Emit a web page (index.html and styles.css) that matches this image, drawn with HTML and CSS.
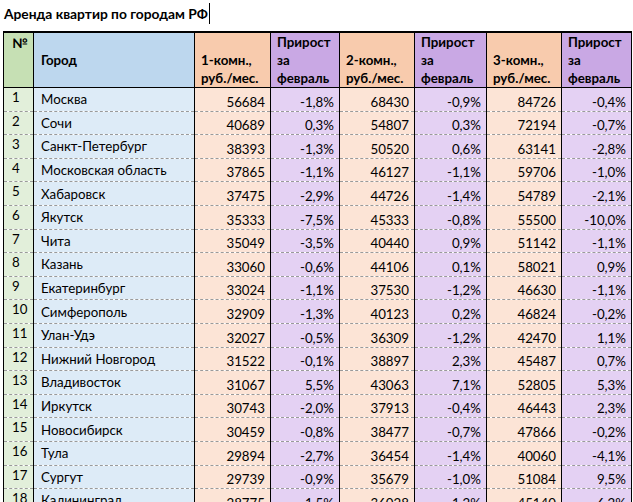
FILE: index.html
```html
<!DOCTYPE html>
<html lang="ru">
<head>
<meta charset="utf-8">
<title>Аренда квартир</title>
<link rel="stylesheet" href="styles.css">
</head>
<body>
<div class="title"><span class="title-text">Аренда квартир по городам РФ</span><span class="cursor"></span></div>
<table class="sheet">
<colgroup>
<col class="c-num"><col class="c-city"><col class="c-r1"><col class="c-g1"><col class="c-r2"><col class="c-g2"><col class="c-r3"><col class="c-g3">
</colgroup>
<thead>
<tr class="head-row">
<th class="num top">№</th>
<th class="city mid">Город</th>
<th class="rent">1-комн.,<br>руб./мес.</th>
<th class="grow">Прирост<br>за<br>февраль</th>
<th class="rent">2-комн.,<br>руб./мес.</th>
<th class="grow">Прирост<br>за<br>февраль</th>
<th class="rent">3-комн.,<br>руб./мес.</th>
<th class="grow">Прирост<br>за<br>февраль</th>
</tr>
</thead>
<tbody>
<tr><td class="num">1</td><td class="city">Москва</td><td class="rent">56684</td><td class="grow">-1,8%</td><td class="rent">68430</td><td class="grow">-0,9%</td><td class="rent">84726</td><td class="grow">-0,4%</td></tr>
<tr><td class="num">2</td><td class="city">Сочи</td><td class="rent">40689</td><td class="grow">0,3%</td><td class="rent">54807</td><td class="grow">0,3%</td><td class="rent">72194</td><td class="grow">-0,7%</td></tr>
<tr><td class="num">3</td><td class="city">Санкт-Петербург</td><td class="rent">38393</td><td class="grow">-1,3%</td><td class="rent">50520</td><td class="grow">0,6%</td><td class="rent">63141</td><td class="grow">-2,8%</td></tr>
<tr><td class="num">4</td><td class="city">Московская область</td><td class="rent">37865</td><td class="grow">-1,1%</td><td class="rent">46127</td><td class="grow">-1,1%</td><td class="rent">59706</td><td class="grow">-1,0%</td></tr>
<tr><td class="num">5</td><td class="city">Хабаровск</td><td class="rent">37475</td><td class="grow">-2,9%</td><td class="rent">44726</td><td class="grow">-1,4%</td><td class="rent">54789</td><td class="grow">-2,1%</td></tr>
<tr><td class="num">6</td><td class="city">Якутск</td><td class="rent">35333</td><td class="grow">-7,5%</td><td class="rent">45333</td><td class="grow">-0,8%</td><td class="rent">55500</td><td class="grow">-10,0%</td></tr>
<tr><td class="num">7</td><td class="city">Чита</td><td class="rent">35049</td><td class="grow">-3,5%</td><td class="rent">40440</td><td class="grow">0,9%</td><td class="rent">51142</td><td class="grow">-1,1%</td></tr>
<tr><td class="num">8</td><td class="city">Казань</td><td class="rent">33060</td><td class="grow">-0,6%</td><td class="rent">44106</td><td class="grow">0,1%</td><td class="rent">58021</td><td class="grow">0,9%</td></tr>
<tr><td class="num">9</td><td class="city">Екатеринбург</td><td class="rent">33024</td><td class="grow">-1,1%</td><td class="rent">37530</td><td class="grow">-1,2%</td><td class="rent">46630</td><td class="grow">-1,1%</td></tr>
<tr><td class="num">10</td><td class="city">Симферополь</td><td class="rent">32909</td><td class="grow">-1,3%</td><td class="rent">40123</td><td class="grow">0,2%</td><td class="rent">46824</td><td class="grow">-0,2%</td></tr>
<tr><td class="num">11</td><td class="city">Улан-Удэ</td><td class="rent">32027</td><td class="grow">-0,5%</td><td class="rent">36309</td><td class="grow">-1,2%</td><td class="rent">42470</td><td class="grow">1,1%</td></tr>
<tr><td class="num">12</td><td class="city">Нижний Новгород</td><td class="rent">31522</td><td class="grow">-0,1%</td><td class="rent">38897</td><td class="grow">2,3%</td><td class="rent">45487</td><td class="grow">0,7%</td></tr>
<tr><td class="num">13</td><td class="city">Владивосток</td><td class="rent">31067</td><td class="grow">5,5%</td><td class="rent">43063</td><td class="grow">7,1%</td><td class="rent">52805</td><td class="grow">5,3%</td></tr>
<tr><td class="num">14</td><td class="city">Иркутск</td><td class="rent">30743</td><td class="grow">-2,0%</td><td class="rent">37913</td><td class="grow">-0,4%</td><td class="rent">46443</td><td class="grow">2,3%</td></tr>
<tr><td class="num">15</td><td class="city">Новосибирск</td><td class="rent">30459</td><td class="grow">-0,8%</td><td class="rent">38477</td><td class="grow">-0,7%</td><td class="rent">47866</td><td class="grow">-0,2%</td></tr>
<tr><td class="num">16</td><td class="city">Тула</td><td class="rent">29894</td><td class="grow">-2,7%</td><td class="rent">36454</td><td class="grow">-1,4%</td><td class="rent">40060</td><td class="grow">-4,1%</td></tr>
<tr><td class="num">17</td><td class="city">Сургут</td><td class="rent">29739</td><td class="grow">-0,9%</td><td class="rent">35679</td><td class="grow">-1,0%</td><td class="rent">51084</td><td class="grow">9,5%</td></tr>
<tr><td class="num">18</td><td class="city">Калининград</td><td class="rent">28775</td><td class="grow">-1,5%</td><td class="rent">36028</td><td class="grow">-1,2%</td><td class="rent">45140</td><td class="grow">6,2%</td></tr>
</tbody>
</table>
</body>
</html>
```

FILE: styles.css
```css
html, body {
  margin: 0;
  padding: 0;
  background: #ffffff;
}
body {
  font-family: Lato, "Liberation Sans", sans-serif;
  font-size: 13.3px;
  color: #000;
  overflow: hidden;
  height: 502px;
}
.title {
  height: 31px;
  padding-left: 4px;
  display: flex;
  align-items: flex-start;
}
.title-text {
  font-weight: bold;
  font-size: 13.8px;
  line-height: 20px;
  margin-top: 4px;
}
.cursor {
  width: 1px;
  height: 21px;
  background: #000;
  margin-top: 3px;
  margin-left: 1px;
}
.sheet {
  margin-left: 3px;
  border-collapse: collapse;
  table-layout: fixed;
  width: 628px;
}
.c-num { width: 30px; }
.c-city { width: 161px; }
.c-r1 { width: 76px; }
.c-g1 { width: 69px; }
.c-r2 { width: 75px; }
.c-g2 { width: 72px; }
.c-r3 { width: 75px; }
.c-g3 { width: 70px; }
.sheet tr { height: 23.6px; }
.sheet tr.head-row { height: 54px; }
.sheet th, .sheet td {
  border-left: 1px solid #000;
  border-right: 1px solid #000;
  padding: 0 5px 0 6px;
  white-space: nowrap;
  overflow: hidden;
  line-height: 18px;
}
.sheet th {
  border-top: 2px solid #000;
  border-bottom: 1px solid #000;
  font-weight: bold;
  text-align: left;
  vertical-align: bottom;
}
.sheet td {
  border-bottom: 1px dashed #9a9a9a;
  vertical-align: bottom;
}
.sheet th.top { vertical-align: top; padding-top: 1px; }
.sheet th.mid { vertical-align: middle; }
.sheet .num { padding-left: 8px; }
.sheet td.num { vertical-align: top; padding-top: 0; }
.sheet td.city { vertical-align: middle; padding-left: 7px; }
.sheet th.city { padding-left: 7px; }
.sheet td.rent, .sheet td.grow { text-align: right; }
.sheet th.num { background: #c6e0b4; }
.sheet td.num { background: #e2efda; }
.sheet th.city { background: #bdd7ee; }
.sheet td.city { background: #ddebf7; }
.sheet th.rent { background: #f8cbad; }
.sheet td.rent { background: #fce4d6; }
.sheet th.grow { background: #c9a8e4; }
.sheet td.grow { background: #e4d1f3; }
```
